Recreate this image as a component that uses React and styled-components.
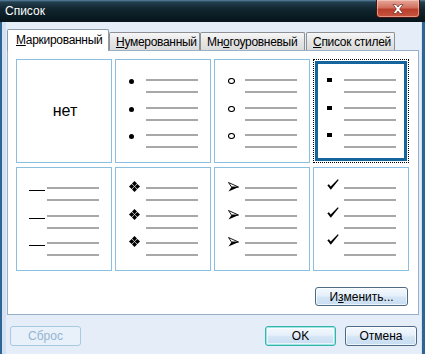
import React from 'react';
import styled, { createGlobalStyle, css } from 'styled-components';

const GlobalStyle = createGlobalStyle`
  html, body {
    margin: 0;
    padding: 0;
    width: 425px;
    height: 354px;
    overflow: hidden;
  }
  * {
    box-sizing: border-box;
  }
`;

const Window = styled.div`
  width: 425px;
  height: 354px;
  display: flex;
  flex-direction: column;
  background: #2f6594;
  font-family: "Liberation Sans", Arial, sans-serif;
  font-size: 12px;
  color: #000;
  overflow: hidden;
`;

const TitleBar = styled.div`
  height: 22px;
  flex-shrink: 0;
  display: flex;
  justify-content: space-between;
  align-items: flex-start;
  padding-left: 5px;
  background: linear-gradient(#5b85a3 0, #23404f 2px, #11262f 9px, #07141b 22px);
`;

const Title = styled.span`
  color: #fff;
  line-height: 23px;
  font-size: 12px;
`;

const CloseButton = styled.div`
  width: 44px;
  height: 18px;
  margin-right: 5px;
  display: flex;
  align-items: center;
  justify-content: center;
  border: 1px solid #4a1510;
  border-top: none;
  border-radius: 0 0 4px 4px;
  background: linear-gradient(#e6a89b 0, #d2705f 45%, #b8402d 55%, #c9553f 100%);
  box-shadow: inset 0 0 0 1px rgba(255, 220, 210, 0.5);
`;

const Client = styled.div`
  flex: 1;
  margin: 0 3px 0 2px;
  padding: 7px 3px 0 5px;
  background: #e4edf8;
  box-shadow: inset 4px 0 0 #d3e2f2, inset -1px 0 0 #d3e2f2;
  display: flex;
  flex-direction: column;
`;

const TabRow = styled.div`
  height: 21px;
  display: flex;
  align-items: flex-end;
`;

const Tab = styled.div`
  width: ${p => p.$w}px;
  margin-left: ${p => p.$ml || 0}px;
  height: 18px;
  padding-left: ${p => p.$pl || 6}px;
  display: flex;
  align-items: center;
  border: 1px solid #8d9094;
  border-bottom: none;
  border-radius: 2px 2px 0 0;
  background: linear-gradient(#f6f6f6, #e6e6e6 50%, #dbdbdb);
  white-space: nowrap;
  overflow: hidden;
  letter-spacing: -0.3px;
  ${p => p.$active && css`
    height: 22px;
    margin-bottom: -1px;
    position: relative;
    z-index: 1;
    background: #fff;
    border-color: #8d9ba8;
    padding-bottom: 1px;
  `}
`;

const Key = styled.span`
  text-decoration: underline;
`;

const Panel = styled.div`
  height: 265px;
  border: 1px solid #97b0c8;
  background: #fff;
  padding: 8px 10px 0 8px;
  display: flex;
  flex-direction: column;
`;

const Grid = styled.div`
  display: grid;
  grid-template-columns: repeat(4, 96px);
  grid-auto-rows: 104px;
  column-gap: 3px;
  row-gap: 4px;
`;

const Cell = styled.div`
  border: 1px solid #8abfe1;
  padding-top: 19px;
  display: flex;
  flex-direction: column;
  ${p => p.$selected && css`
    border: 1px dotted #000;
    box-shadow: inset 0 0 0 1px #fff, inset 0 0 0 4px #13659b;
  `}
`;

const NoneCell = styled(Cell)`
  padding-top: 0;
  padding-left: 2px;
  align-items: center;
  justify-content: center;
  font-size: 16px;
`;

const Item = styled.div`
  height: 28px;
  display: flex;
  align-items: flex-start;
`;

const BulletSlot = styled.div`
  width: 30px;
  height: 14px;
  flex-shrink: 0;
  display: flex;
  align-items: flex-start;
  padding-left: ${p => p.$x}px;
  svg {
    display: block;
    margin-top: ${p => p.$y}px;
  }
`;

const Lines = styled.div`
  display: flex;
  flex-direction: column;
  gap: 10px;
`;

const Line = styled.div`
  width: 52px;
  height: 2px;
  background: #a8a8a8;
`;

const PanelFooter = styled.div`
  margin-top: 16px;
  display: flex;
  justify-content: flex-end;
`;

const Button = styled.div`
  width: ${p => p.$w}px;
  height: ${p => p.$h || 20}px;
  margin-left: ${p => p.$ml || 0}px;
  margin-right: ${p => p.$mr || 0}px;
  display: flex;
  align-items: center;
  justify-content: center;
  border: 1px solid #4f6a84;
  border-radius: 3px;
  background: linear-gradient(#f4f9fe 0, #e6f0fa 45%, #d4e5f5 55%, #c8ddf1 100%);
  box-shadow: inset 0 0 0 1px rgba(255, 255, 255, 0.7);
  color: #000;
  ${p => p.$default && css`
    border-color: #35b3b0;
    box-shadow: inset 0 0 0 1px #9fe6e3, inset 0 0 0 2px rgba(255, 255, 255, 0.6);
  `}
  ${p => p.$disabled && css`
    border-color: #a9c8e2;
    background: #e8f1fa;
    box-shadow: none;
    color: #96b4d1;
  `}
`;

const ButtonRow = styled.div`
  margin-top: 11px;
  display: flex;
  align-items: center;
`;

const Spacer = styled.div`
  flex: 1;
`;

const Disc = () => (
  <svg width="5" height="5" viewBox="0 0 5 5">
    <circle cx="2.5" cy="2.5" r="2.5" fill="#000" />
  </svg>
);

const Ring = () => (
  <svg width="7" height="6" viewBox="0 0 7 6">
    <ellipse cx="3.5" cy="3" rx="3" ry="2.5" fill="none" stroke="#000" strokeWidth="1.1" />
  </svg>
);

const Square = () => (
  <svg width="5" height="4" viewBox="0 0 5 4">
    <rect x="0" y="0" width="5" height="4" fill="#000" />
  </svg>
);

const Dash = () => (
  <svg width="16" height="1" viewBox="0 0 16 1">
    <rect x="0" y="0" width="16" height="1" fill="#000" />
  </svg>
);

const Diamonds = () => (
  <svg width="11" height="11" viewBox="0 0 11 11">
    <path d="M5.5 0 L8 2.6 L5.5 5.2 L3 2.6 Z" fill="#000" />
    <path d="M5.5 5.8 L8 8.4 L5.5 11 L3 8.4 Z" fill="#000" />
    <path d="M0 5.5 L2.6 3 L5.2 5.5 L2.6 8 Z" fill="#000" />
    <path d="M5.8 5.5 L8.4 3 L11 5.5 L8.4 8 Z" fill="#000" />
  </svg>
);

const Arrow = () => (
  <svg width="11" height="10" viewBox="0 0 11 10">
    <path d="M0.5 0.5 L10.5 5 L3.5 5 Z" fill="#fff" stroke="#000" strokeWidth="0.9" strokeLinejoin="round" />
    <path d="M3.5 5 L10.8 5 L0.5 9.6 Z" fill="#000" />
  </svg>
);

const Check = () => (
  <svg width="12" height="11" viewBox="0 0 12 11">
    <path d="M0.3 6.2 L1.9 5.2 L3.7 7.6 L10.8 0.2 L11.7 1 L3.8 10.8 Z" fill="#000" />
  </svg>
);

const bullets = [
  { key: 'disc', Icon: Disc, x: 13, y: 0 },
  { key: 'ring', Icon: Ring, x: 13, y: -1 },
  { key: 'square', Icon: Square, x: 13, y: -1 },
  { key: 'dash', Icon: Dash, x: 12, y: 3 },
  { key: 'diamond', Icon: Diamonds, x: 13, y: -6 },
  { key: 'arrow', Icon: Arrow, x: 13, y: -5 },
  { key: 'check', Icon: Check, x: 13, y: -8 },
];

const BulletCell = ({ bullet, selected }) => {
  const { Icon } = bullet;
  return (
    <Cell $selected={selected}>
      {[0, 1, 2].map(i => (
        <Item key={i}>
          <BulletSlot $x={bullet.x} $y={bullet.y}>
            <Icon />
          </BulletSlot>
          <Lines>
            <Line />
            <Line />
          </Lines>
        </Item>
      ))}
    </Cell>
  );
};

export default function App() {
  return (
    <>
      <GlobalStyle />
      <Window>
        <TitleBar>
          <Title>Список</Title>
          <CloseButton>
            <svg width="12" height="10" viewBox="0 0 12 10">
              <path
                d="M1 0.5 L4 0.5 L6 3 L8 0.5 L11 0.5 L7.6 5 L11 9.5 L8 9.5 L6 7 L4 9.5 L1 9.5 L4.4 5 Z"
                fill="#fff"
                stroke="#5a1b12"
                strokeWidth="0.6"
              />
            </svg>
          </CloseButton>
        </TitleBar>
        <Client>
          <TabRow>
            <Tab $active $w={102} $pl={8}>
              <span><Key>М</Key>аркированный</span>
            </Tab>
            <Tab $w={91} $ml={0}>
              <span><Key>Н</Key>умерованный</span>
            </Tab>
            <Tab $w={105}>
              <span>Мн<Key>о</Key>гоуровневый</span>
            </Tab>
            <Tab $w={89} $ml={1}>
              <span><Key>С</Key>писок стилей</span>
            </Tab>
          </TabRow>
          <Panel>
            <Grid>
              <NoneCell>нет</NoneCell>
              <BulletCell bullet={bullets[0]} />
              <BulletCell bullet={bullets[1]} />
              <BulletCell bullet={bullets[2]} selected />
              <BulletCell bullet={bullets[3]} />
              <BulletCell bullet={bullets[4]} />
              <BulletCell bullet={bullets[5]} />
              <BulletCell bullet={bullets[6]} />
            </Grid>
            <PanelFooter>
              <Button $w={93} $h={19}>
                <span>И<Key>з</Key>менить...</span>
              </Button>
            </PanelFooter>
          </Panel>
          <ButtonRow>
            <Button $w={71} $ml={3} $disabled>Сброс</Button>
            <Spacer />
            <Button $w={71} $mr={9} $default>OK</Button>
            <Button $w={72} $mr={2}>Отмена</Button>
          </ButtonRow>
        </Client>
      </Window>
    </>
  );
}
